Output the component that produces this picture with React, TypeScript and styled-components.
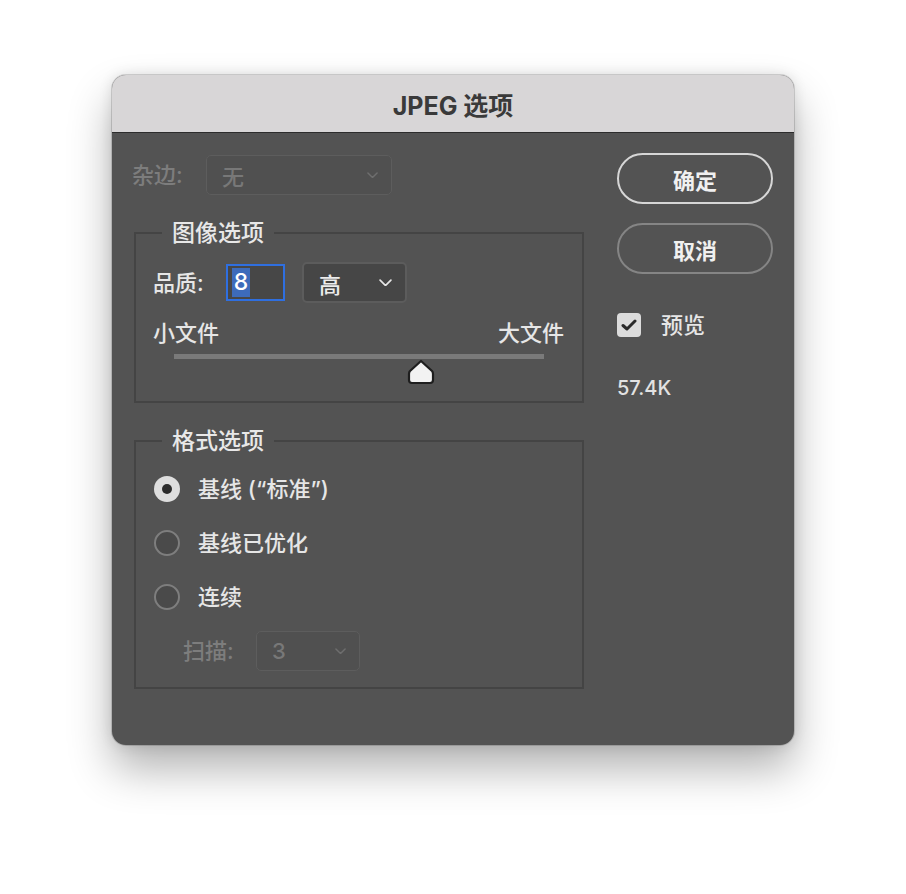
import React from "react";
import styled, { createGlobalStyle } from "styled-components";

const Global = createGlobalStyle`
  html, body { margin: 0; padding: 0; background: #ffffff; }
  body {
    font-family: "Inter", "Noto Sans CJK SC", sans-serif;
    -webkit-font-smoothing: antialiased;
  }
  * { box-sizing: border-box; }
`;

const Page = styled.div`
  width: 906px;
  height: 894px;
  display: flex;
  justify-content: center;
  align-items: flex-start;
  padding-top: 75px;
`;

const Window = styled.div`
  width: 682px;
  height: 670px;
  border-radius: 14px;
  overflow: hidden;
  background: #535353;
  display: flex;
  flex-direction: column;
  box-shadow: 0 24px 44px rgba(0, 0, 0, 0.3), 0 0 14px rgba(0, 0, 0, 0.12),
    0 0 0 1px rgba(0, 0, 0, 0.14);
`;

const TitleBar = styled.div`
  height: 58px;
  flex-shrink: 0;
  background: #d8d6d7;
  border-bottom: 1px solid #2c2c2c;
  display: flex;
  align-items: center;
  justify-content: center;
  font-size: 25px;
  font-weight: 700;
  color: #3a3a3a;
`;

const Body = styled.div`
  flex: 1;
  display: flex;
  padding: 22px 21px 0 20px;
  gap: 33px;
`;

const LeftColumn = styled.div`
  width: 452px;
  display: flex;
  flex-direction: column;
`;

const RightColumn = styled.div`
  width: 156px;
  display: flex;
  flex-direction: column;
  margin-top: -2px;
`;

const Row = styled.div<{ $h?: number; $indent?: number; $mt?: number }>`
  display: flex;
  align-items: center;
  height: ${(p) => p.$h ?? 40}px;
  margin-left: ${(p) => p.$indent ?? 0}px;
  margin-top: ${(p) => p.$mt ?? 0}px;
`;

const Label = styled.span<{ $disabled?: boolean; $w?: number }>`
  font-size: 22px;
  line-height: 28px;
  font-weight: 500;
  color: ${(p) => (p.$disabled ? "#7d7d7d" : "#e6e6e6")};
  width: ${(p) => (p.$w ? `${p.$w}px` : "auto")};
  flex-shrink: 0;
  white-space: nowrap;
`;

const SelectBox = styled.div<{ $w: number; $h: number; $disabled?: boolean }>`
  width: ${(p) => p.$w}px;
  height: ${(p) => p.$h}px;
  border-radius: 5px;
  display: flex;
  align-items: center;
  justify-content: space-between;
  padding: 0 13px 0 15px;
  font-size: 22px;
  font-weight: 500;
  background: ${(p) => (p.$disabled ? "#505050" : "#464646")};
  border: ${(p) => (p.$disabled ? "1px solid #5d5d5d" : "2px solid #5c5c5c")};
  color: ${(p) => (p.$disabled ? "#787878" : "#ececec")};
`;

const NumberInput = styled.div`
  width: 59px;
  height: 37px;
  border: 2px solid #2f6fe0;
  background: #474747;
  display: flex;
  align-items: center;
  padding-left: 4px;
  margin-right: 17px;
`;

const Selected = styled.span`
  background: #3d6bbb;
  color: #ffffff;
  font-size: 23px;
  font-weight: 500;
  line-height: 29px;
  height: 29px;
  width: 18px;
  text-align: center;
`;

const Group = styled.fieldset<{ $mt: number; $pt: number; $pb: number }>`
  margin: ${(p) => p.$mt}px 0 0 2px;
  width: 450px;
  border: 2px solid #444444;
  padding: ${(p) => p.$pt}px 18px ${(p) => p.$pb}px 17px;
  min-width: 0;
`;

const Legend = styled.legend`
  margin-left: 9px;
  padding: 0 10px;
  font-size: 23px;
  font-weight: 500;
  line-height: 28px;
  color: #e8e8e8;
`;

const SizeLabels = styled.div`
  display: flex;
  justify-content: space-between;
  margin-top: 16px;
  height: 28px;
  align-items: center;
`;

const SliderArea = styled.div`
  position: relative;
  margin: 7px 0 0 21px;
  width: 370px;
  height: 47px;
`;

const Track = styled.div`
  height: 5px;
  background: #7a7a7a;
`;

const Thumb = styled.svg`
  position: absolute;
  top: 5px;
  width: 28px;
  height: 26px;
  margin-left: -14px;
`;

const RadioRow = styled.div`
  display: flex;
  align-items: center;
  height: 54px;
  padding-left: 1px;
  gap: 18px;
`;

const Radio = styled.span<{ $checked?: boolean }>`
  width: 26px;
  height: 26px;
  border-radius: 50%;
  flex-shrink: 0;
  display: flex;
  align-items: center;
  justify-content: center;
  background: ${(p) => (p.$checked ? "#dedede" : "#4a4a4a")};
  border: ${(p) => (p.$checked ? "none" : "2px solid #7e7e7e")};
  &::after {
    content: "";
    display: ${(p) => (p.$checked ? "block" : "none")};
    width: 10px;
    height: 10px;
    border-radius: 50%;
    background: #2c2c2c;
  }
`;

const PillButton = styled.div<{ $primary?: boolean; $mt?: number }>`
  height: 51px;
  width: 156px;
  border-radius: 26px;
  border: 2px solid ${(p) => (p.$primary ? "#d6d6d6" : "#858585")};
  display: flex;
  align-items: center;
  justify-content: center;
  font-size: 22px;
  font-weight: 700;
  color: #f0f0f0;
  margin-top: ${(p) => p.$mt ?? 0}px;
`;

const CheckRow = styled.div`
  display: flex;
  align-items: center;
  gap: 20px;
  margin-top: 39px;
  height: 24px;
`;

const CheckBox = styled.span`
  width: 24px;
  height: 24px;
  border-radius: 4px;
  background: #dcdcdc;
  display: flex;
  align-items: center;
  justify-content: center;
`;

const SizeText = styled.div`
  margin-top: 37px;
  font-size: 20px;
  font-weight: 500;
  line-height: 28px;
  color: #e2e2e2;
`;

const Chevron = ({ color, w }: { color: string; w: number }) => (
  <svg width={w} height={w * 0.6} viewBox="0 0 12 7.2" fill="none">
    <polyline
      points="1,1 6,6 11,1"
      stroke={color}
      strokeWidth="1.6"
      strokeLinecap="round"
      strokeLinejoin="round"
    />
  </svg>
);

const quality = 8;
const qualityMax = 12;

export default function App() {
  return (
    <>
      <Global />
      <Page>
        <Window>
          <TitleBar>JPEG 选项</TitleBar>
          <Body>
            <LeftColumn>
              <Row $h={40}>
                <Label $disabled $w={74}>杂边:</Label>
                <SelectBox $w={186} $h={40} $disabled>
                  <span>无</span>
                  <Chevron color="#6e6e6e" w={11} />
                </SelectBox>
              </Row>

              <Group $mt={24} $pt={15} $pb={0}>
                <Legend>图像选项</Legend>
                <Row $h={41}>
                  <Label $w={73}>品质:</Label>
                  <NumberInput>
                    <Selected>8</Selected>
                  </NumberInput>
                  <SelectBox $w={105} $h={41}>
                    <span>高</span>
                    <Chevron color="#e6e6e6" w={13} />
                  </SelectBox>
                </Row>
                <SizeLabels>
                  <Label>小文件</Label>
                  <Label>大文件</Label>
                </SizeLabels>
                <SliderArea>
                  <Track />
                  <Thumb
                    viewBox="0 0 28 26"
                    style={{ left: `${(quality / qualityMax) * 100}%` }}
                  >
                    <path
                      d="M14 2 L25 12 Q26 13 26 15 L26 21 Q26 24 23 24 L5 24 Q2 24 2 21 L2 15 Q2 13 3 12 Z"
                      fill="#f2f2f2"
                      stroke="#1e1e1e"
                      strokeWidth="2.2"
                      strokeLinejoin="round"
                    />
                  </Thumb>
                </SliderArea>
              </Group>

              <Group $mt={24} $pt={7} $pb={16}>
                <Legend>格式选项</Legend>
                <RadioRow>
                  <Radio $checked />
                  <Label>基线 (“标准”)</Label>
                </RadioRow>
                <RadioRow>
                  <Radio />
                  <Label>基线已优化</Label>
                </RadioRow>
                <RadioRow>
                  <Radio />
                  <Label>连续</Label>
                </RadioRow>
                <Row $h={40} $indent={30} $mt={7}>
                  <Label $disabled $w={73}>扫描:</Label>
                  <SelectBox $w={104} $h={40} $disabled>
                    <span>3</span>
                    <Chevron color="#6e6e6e" w={11} />
                  </SelectBox>
                </Row>
              </Group>
            </LeftColumn>

            <RightColumn>
              <PillButton $primary>确定</PillButton>
              <PillButton $mt={19}>取消</PillButton>
              <CheckRow>
                <CheckBox>
                  <svg width="16" height="14" viewBox="0 0 16 14" fill="none">
                    <polyline
                      points="2,7.5 6,11 14,3"
                      stroke="#2a2a2a"
                      strokeWidth="3"
                      strokeLinecap="round"
                      strokeLinejoin="round"
                    />
                  </svg>
                </CheckBox>
                <Label>预览</Label>
              </CheckRow>
              <SizeText>57.4K</SizeText>
            </RightColumn>
          </Body>
        </Window>
      </Page>
    </>
  );
}
